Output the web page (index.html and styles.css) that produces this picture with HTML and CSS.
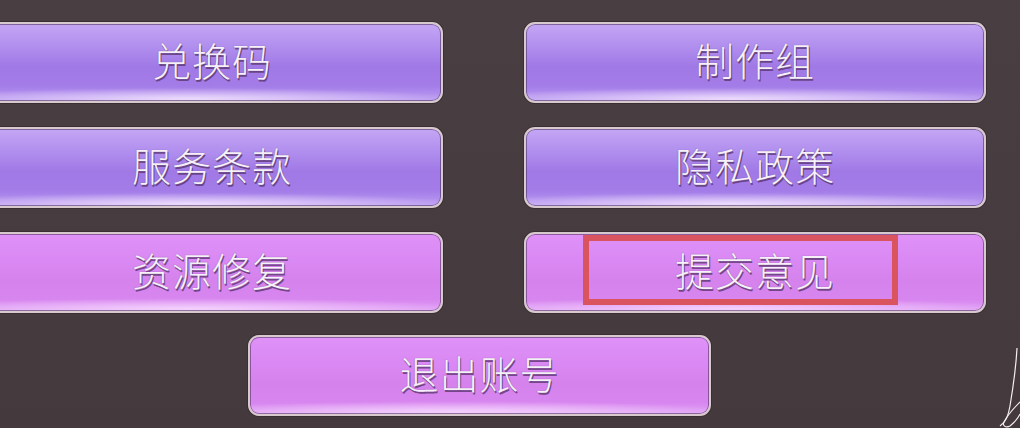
FILE: index.html
```html
<!DOCTYPE html>
<html lang="zh-CN">
<head>
    <meta charset="UTF-8">
    <meta name="viewport" content="width=device-width, initial-scale=1.0">
    <title>设置</title>
    <link rel="stylesheet" href="styles.css">
</head>
<body>
    <div class="screen">
        <div class="menu">
            <button class="menu-btn violet">兑换码</button>
            <button class="menu-btn violet">制作组</button>
            <button class="menu-btn violet">服务条款</button>
            <button class="menu-btn violet">隐私政策</button>
            <button class="menu-btn pink">资源修复</button>
            <button class="menu-btn pink">
                提交意见
                <span class="mark"></span>
            </button>
            <button class="menu-btn pink logout">退出账号</button>
        </div>

        <svg class="deco" width="40" height="80" viewBox="0 0 40 80">
            <path d="M37 0 C 36 20, 33 40, 30 58 C 28 68, 26 74, 20 78" fill="none" stroke="#f3eef0" stroke-width="1.2"/>
            <path d="M40 54 C 34 60, 28 66, 24 74 C 22 78, 26 80, 30 78 C 35 74, 38 70, 40 66" fill="none" stroke="#f3eef0" stroke-width="1.1"/>
        </svg>
    </div>
</body>
</html>
```

FILE: styles.css
```css
* {
    margin: 0;
    padding: 0;
    box-sizing: border-box;
}

body {
    background: #463b3f;
    width: 1020px;
    height: 428px;
    overflow: hidden;
    font-family: "Noto Sans CJK SC", "Noto Sans", sans-serif;
}

.screen {
    position: relative;
    width: 1020px;
    height: 428px;
    background: linear-gradient(to bottom, #493e42, #443a3e);
}

.menu {
    display: grid;
    grid-template-columns: 462px 462px;
    grid-auto-rows: 81px;
    column-gap: 81px;
    row-gap: 24px;
    margin-left: -19px;
    padding-top: 22px;
    width: 1005px;
}

.menu-btn {
    position: relative;
    height: 81px;
    padding-bottom: 7px;
    border: 2px solid #d8c9cf;
    border-radius: 11px;
    box-shadow: 0 0 0 1px #3a3033, inset 0 0 0 1px rgba(70, 45, 85, 0.55);
    font-family: "Noto Sans CJK SC", "Noto Sans", sans-serif;
    font-size: 39px;
    font-weight: 300;
    line-height: 1;
    letter-spacing: 1px;
    color: #f6f0f8;
    text-shadow: 1px 2px 0 rgba(90, 55, 110, 0.8), 0 0 1px rgba(90, 55, 110, 0.7);
    cursor: pointer;
}

.violet {
    background:
        radial-gradient(ellipse 60% 14% at 45% 97%, rgba(248, 235, 255, 0.8), rgba(248, 235, 255, 0) 100%),
        linear-gradient(to bottom, #c4a6f4 0%, #b08eee 30%, #a179e6 55%, #a37ce8 80%, #bc9ef2 100%);
}

.pink {
    background:
        radial-gradient(ellipse 60% 14% at 45% 97%, rgba(250, 225, 255, 0.75), rgba(250, 225, 255, 0) 100%),
        linear-gradient(to bottom, #df92f8 0%, #da88f3 35%, #d582ec 60%, #d785ef 85%, #e2a6f6 100%);
}

.logout {
    grid-column: 1 / span 2;
    justify-self: center;
    width: 463px;
    margin-right: 8px;
    margin-top: -2px;
}

.mark {
    position: absolute;
    left: 57px;
    top: 1px;
    width: 315px;
    height: 70px;
    border: 6px solid #d9545f;
}

.deco {
    position: absolute;
    right: 0;
    bottom: 0;
}
```
